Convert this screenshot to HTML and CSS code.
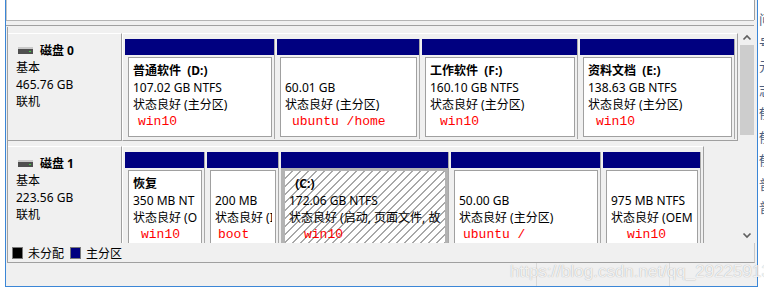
FILE: index.html
```html
<!DOCTYPE html>
<html lang="zh-CN">
<head>
  <meta charset="UTF-8">
  <title>磁盘管理</title>
  <link rel="stylesheet" href="styles.css">
</head>
<body>
  <div class="screen">
    <div class="edge-left"></div>
    <div class="window">
      <div class="list-pane"></div>
      <div class="splitter"></div>
      <div class="graph">
        <div class="disks">
          <!-- 磁盘 0 -->
          <div class="disk">
            <div class="disk-label">
              <div class="disk-title">
                <svg class="drive" width="15" height="7" viewBox="0 0 15 7">
                  <rect x="0" y="0" width="15" height="2" fill="#c9c9c9"/>
                  <rect x="0" y="2" width="15" height="5" fill="#4f4f4f"/>
                  <rect x="11" y="4" width="2" height="1" fill="#3fd13f"/>
                </svg>
                <b>磁盘 0</b>
              </div>
              <div>基本</div>
              <div>465.76 GB</div>
              <div>联机</div>
            </div>
            <div class="parts">
              <div class="part" style="width:150px">
                <div class="part-head"></div>
                <div class="part-body">
                  <div class="vol">
                    <div class="name">普通软件  (D:)</div>
                    <div>107.02 GB NTFS</div>
                    <div>状态良好 (主分区)</div>
                    <div class="note ind-5">win10</div>
                  </div>
                </div>
              </div>
              <div class="part" style="width:143px">
                <div class="part-head"></div>
                <div class="part-body">
                  <div class="vol">
                    <div class="name"> </div>
                    <div>60.01 GB</div>
                    <div>状态良好 (主分区)</div>
                    <div class="note ind-7">ubuntu /home</div>
                  </div>
                </div>
              </div>
              <div class="part" style="width:156px">
                <div class="part-head"></div>
                <div class="part-body">
                  <div class="vol">
                    <div class="name">工作软件  (F:)</div>
                    <div>160.10 GB NTFS</div>
                    <div>状态良好 (主分区)</div>
                    <div class="note ind-10">win10</div>
                  </div>
                </div>
              </div>
              <div class="part" style="width:155px">
                <div class="part-head"></div>
                <div class="part-body">
                  <div class="vol">
                    <div class="name">资料文档  (E:)</div>
                    <div>138.63 GB NTFS</div>
                    <div>状态良好 (主分区)</div>
                    <div class="note ind-8">win10</div>
                  </div>
                </div>
              </div>
            </div>
          </div>
          <!-- 磁盘 1 -->
          <div class="disk">
            <div class="disk-label">
              <div class="disk-title">
                <svg class="drive" width="15" height="7" viewBox="0 0 15 7">
                  <rect x="0" y="0" width="15" height="2" fill="#c9c9c9"/>
                  <rect x="0" y="2" width="15" height="5" fill="#4f4f4f"/>
                  <rect x="11" y="4" width="2" height="1" fill="#3fd13f"/>
                </svg>
                <b>磁盘 1</b>
              </div>
              <div>基本</div>
              <div>223.56 GB</div>
              <div>联机</div>
            </div>
            <div class="parts">
              <div class="part" style="width:80px">
                <div class="part-head"></div>
                <div class="part-body">
                  <div class="vol">
                    <div class="name">恢复</div>
                    <div>350 MB NT</div>
                    <div>状态良好 (O</div>
                    <div class="note ind-8">win10</div>
                  </div>
                </div>
              </div>
              <div class="part" style="width:72px">
                <div class="part-head"></div>
                <div class="part-body">
                  <div class="vol">
                    <div class="name"> </div>
                    <div>200 MB</div>
                    <div>状态良好 (I</div>
                    <div class="note ind-3">boot</div>
                  </div>
                </div>
              </div>
              <div class="part sel" style="width:168px">
                <div class="part-head"></div>
                <div class="part-body">
                  <div class="vol">
                    <div class="name">  (C:)</div>
                    <div>172.06 GB NTFS</div>
                    <div>状态良好 (启动, 页面文件, 故</div>
                    <div class="note ind-15">win10</div>
                  </div>
                </div>
              </div>
              <div class="part" style="width:150px">
                <div class="part-head"></div>
                <div class="part-body">
                  <div class="vol">
                    <div class="name"> </div>
                    <div>50.00 GB</div>
                    <div>状态良好 (主分区)</div>
                    <div class="note ind-4">ubuntu /</div>
                  </div>
                </div>
              </div>
              <div class="part" style="width:98px">
                <div class="part-head"></div>
                <div class="part-body">
                  <div class="vol">
                    <div class="name"> </div>
                    <div>975 MB NTFS</div>
                    <div>状态良好 (OEM</div>
                    <div class="note ind-16">win10</div>
                  </div>
                </div>
              </div>
            </div>
          </div>
        </div>
        <div class="scrollbar">
          <div class="arrow">
            <svg width="16" height="15" viewBox="0 0 16 15"><polyline points="4.5,9.5 8,6 11.5,9.5" fill="none" stroke="#606060" stroke-width="1.7"/></svg>
          </div>
          <div class="thumb"></div>
          <div class="track"></div>
          <div class="arrow">
            <svg width="16" height="15" viewBox="0 0 16 15"><polyline points="4.5,5.5 8,9 11.5,5.5" fill="none" stroke="#606060" stroke-width="1.7"/></svg>
          </div>
        </div>
      </div>
      <div class="legend">
        <span class="swatch black"></span><span class="legend-text">未分配</span>
        <span class="swatch navy"></span><span class="legend-text">主分区</span>
      </div>
      <div class="status">
        <div class="status-main"></div>
        <div class="status-cell wide"></div>
        <div class="status-cell"></div>
      </div>
    </div>
    <div class="edge-right">
      <div class="other-text">问<br>号<br>元<br>志<br>郁<br>郁<br>郁<br>普<br>普</div>
    </div>
    <div class="watermark">https://blog.csdn.net/qq_29225913</div>
  </div>
</body>
</html>
```

FILE: styles.css
```css
html, body {
  margin: 0;
  background: #fff;
}
body {
  font-family: "Noto Sans", "Noto Sans CJK SC", sans-serif;
  font-size: 12px;
  color: #000;
}
.screen {
  width: 764px;
  height: 290px;
  display: flex;
  position: relative;
  overflow: hidden;
}
.edge-left {
  width: 5px;
}
.window {
  width: 753px;
  height: 287px;
  box-sizing: border-box;
  border: 1px solid #3b86d6;
  border-top: 0;
  background: #f0f0f0;
  display: flex;
  flex-direction: column;
}
.list-pane {
  height: 20px;
  box-sizing: border-box;
  margin-right: 2px;
  background: #fff;
  border-left: 1px solid #c4c4c4;
  border-right: 1px solid #a0a0a0;
}
.splitter {
  height: 6px;
  box-sizing: border-box;
  margin-right: 3px;
  margin-bottom: 1px;
  border-top: 1px solid #b4b4b4;
  border-bottom: 1px solid #a0a0a0;
}
.graph {
  height: 216px;
  display: flex;
  margin-left: 1px;
  margin-right: 2px;
  border-left: 1px solid #a0a0a0;
}
.disks {
  flex: 1;
  overflow: hidden;
  padding-top: 6px;
}
.disk {
  display: flex;
  margin-bottom: 5px;
}
.disk-label {
  width: 114px;
  flex: none;
  box-sizing: border-box;
  border-top: 1px solid #fff;
  border-right: 1px solid #a0a0a0;
  border-bottom: 1px solid #a0a0a0;
  padding: 8px 0 0 8px;
  line-height: 17px;
}
.disk-title {
  display: flex;
  align-items: center;
}
.drive {
  margin: 0 7px 0 2px;
}
.parts {
  display: flex;
  align-items: flex-start;
  padding: 5px 2px 1px 2px;
  border-top: 1px solid #fff;
  border-left: 1px solid #fff;
  border-right: 1px solid #a0a0a0;
  border-bottom: 1px solid #a0a0a0;
}
.part {
  flex: none;
  box-sizing: border-box;
  border-right: 1px solid #a9a9a9;
  margin-right: 2px;
}
.part:last-child {
  margin-right: 0;
}
.part-head {
  height: 16px;
  background: #000080;
}
.part-body {
  padding: 2px 2px 2px 3px;
}
.vol {
  height: 80px;
  box-sizing: border-box;
  border: 1px solid #a0a0a0;
  background: #fff;
  padding: 4px 3px 0 4px;
  line-height: 17px;
}
.vol div {
  height: 17px;
  white-space: pre;
  overflow: hidden;
}
.vol .name {
  font-weight: bold;
}
.part.sel .part-body {
  background: #b3b3b3;
}
.part.sel .vol {
  border-color: #b3b3b3;
  background: repeating-linear-gradient(135deg, #fff 0 4.4px, #a8a8a8 4.4px 5.66px);
}
.vol .note {
  font-family: "Liberation Mono", monospace;
  font-size: 13px;
  color: #f00;
}
.ind-3 { padding-left: 3px; }
.ind-4 { padding-left: 4px; }
.ind-5 { padding-left: 5px; }
.ind-7 { padding-left: 7px; }
.ind-8 { padding-left: 8px; }
.ind-10 { padding-left: 10px; }
.ind-15 { padding-left: 15px; }
.ind-16 { padding-left: 16px; }

.scrollbar {
  width: 16px;
  margin-top: 3px;
  display: flex;
  flex-direction: column;
  background: #f0f0f0;
}
.arrow {
  height: 15px;
}
.arrow svg {
  display: block;
}
.thumb {
  height: 90px;
  margin: 0 1px;
  background: #cdcdcd;
}
.track {
  flex: 1;
}
.legend {
  height: 20px;
  box-sizing: border-box;
  margin-left: 1px;
  margin-right: 2px;
  border-left: 1px solid #a0a0a0;
  border-right: 1px solid #c8c8c8;
  border-bottom: 1px solid #a0a0a0;
  padding-left: 4px;
  display: flex;
  align-items: center;
}
.swatch {
  width: 11px;
  height: 12px;
  box-sizing: border-box;
  border: 1px solid #7a7a7a;
  margin-right: 5px;
}
.swatch.black {
  background: #000;
}
.swatch.navy {
  background: #000080;
}
.legend-text {
  margin-right: 6px;
}
.status {
  flex: 1;
  display: flex;
}
.status-main {
  width: 530px;
}
.status-cell {
  border-left: 1px solid #dadada;
  width: 84px;
}
.status-cell.wide {
  width: 132px;
}
.edge-right {
  width: 6px;
  overflow: hidden;
}
.other-text {
  width: 20px;
  margin-left: 1px;
  padding-top: 8px;
  font-size: 13px;
  line-height: 23.5px;
  color: #4d5f80;
}
.watermark {
  position: absolute;
  left: 510px;
  top: 261px;
  font-family: "Liberation Sans", sans-serif;
  font-size: 17px;
  line-height: 22px;
  color: rgba(255, 255, 255, 0.85);
  text-shadow: 0 0 1px rgba(0, 0, 0, 0.35);
  white-space: nowrap;
}
```
